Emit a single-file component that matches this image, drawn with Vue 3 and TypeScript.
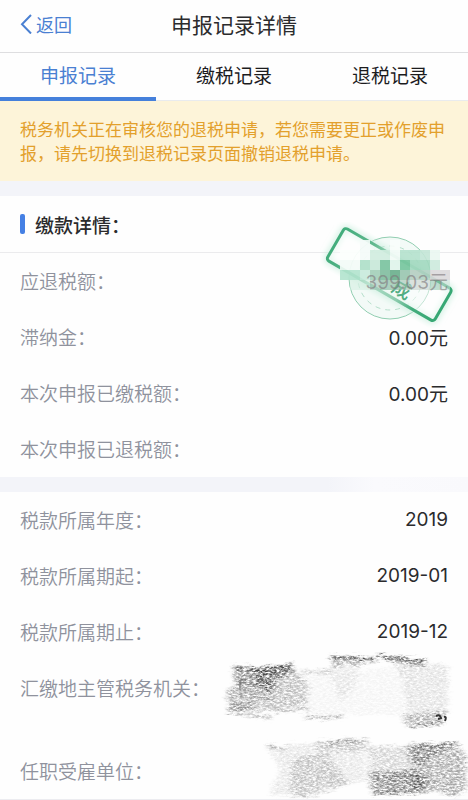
<script setup lang="ts">
import { ref } from 'vue'

interface Row {
  label: string
  value: string
}

interface Block {
  x: number
  y: number
  w: number
  h: number
  c: string
}

interface Patch {
  d: string
  o: number
}

const tabs: string[] = ['申报记录', '缴税记录', '退税记录']
const active = ref<number>(0)

const payment: Row[] = [
  { label: '滞纳金：', value: '0.00元' },
  { label: '本次申报已缴税额：', value: '0.00元' },
  { label: '本次申报已退税额：', value: '' },
]

const period: Row[] = [
  { label: '税款所属年度：', value: '2019' },
  { label: '税款所属期起：', value: '2019-01' },
  { label: '税款所属期止：', value: '2019-12' },
]

// Mosaic squares over the stamp, in stamp canvas units
const mosaic: Block[] = [
  { x: 20, y: 28, w: 20, h: 10, c: '#fcfffd' },
  { x: 40, y: 18, w: 10, h: 20, c: '#f4fbf8' },
  { x: 70, y: 18, w: 10, h: 10, c: '#f9fdfb' },
  { x: 50, y: 28, w: 20, h: 10, c: '#d0ecdf' },
  { x: 70, y: 28, w: 10, h: 10, c: '#f3fbf7' },
  { x: 80, y: 28, w: 20, h: 10, c: '#b5e1cd' },
  { x: 100, y: 28, w: 10, h: 10, c: '#c3e6d6' },
  { x: 110, y: 28, w: 10, h: 10, c: '#eaf7f1' },
  { x: 20, y: 38, w: 20, h: 10, c: '#f3fbf7' },
  { x: 40, y: 38, w: 10, h: 10, c: '#addfc8' },
  { x: 50, y: 38, w: 10, h: 10, c: '#c6e8d8' },
  { x: 60, y: 38, w: 10, h: 10, c: '#78c29d' },
  { x: 70, y: 38, w: 10, h: 10, c: '#dff4ea' },
  { x: 80, y: 38, w: 10, h: 10, c: '#74c49c' },
  { x: 90, y: 38, w: 20, h: 10, c: '#a1d8bf' },
  { x: 110, y: 38, w: 10, h: 10, c: '#cceadd' },
  { x: 20, y: 48, w: 20, h: 10, c: '#b3e3ce' },
  { x: 40, y: 48, w: 10, h: 10, c: '#c8eadb' },
  { x: 50, y: 48, w: 10, h: 10, c: '#a2ceb8' },
  { x: 60, y: 48, w: 10, h: 10, c: '#80bd9f' },
  { x: 70, y: 48, w: 10, h: 10, c: '#68ae8b' },
  { x: 80, y: 48, w: 10, h: 10, c: '#98c5af' },
  { x: 90, y: 48, w: 10, h: 10, c: '#b5cdc1' },
  { x: 100, y: 48, w: 10, h: 10, c: '#b1d2c3' },
  { x: 110, y: 48, w: 20, h: 10, c: '#dcd9db' },
  { x: 30, y: 58, w: 20, h: 10, c: '#d3eee1' },
  { x: 50, y: 58, w: 10, h: 10, c: '#a3c4b5' },
  { x: 60, y: 58, w: 20, h: 10, c: '#7ab498' },
  { x: 80, y: 58, w: 10, h: 10, c: '#9cc2af' },
  { x: 90, y: 58, w: 20, h: 10, c: '#c6d0cc' },
  { x: 110, y: 58, w: 10, h: 10, c: '#98c8b2' },
  { x: 120, y: 58, w: 10, h: 10, c: '#cbe0d7' },
]

// Broad pencil hatching, light to dark
const patches: Patch[] = [
  { d: 'M14 28L72 26L88 46L86 66L50 71L8 73L7 50L14 48Z', o: 0.34 },
  { d: 'M14 30L50 30L60 50L18 50Z', o: 0.42 },
  { d: 'M34 30L73 26L73 34L52 40L50 54L38 46Z', o: 0.8 },
  { d: 'M8 50L48 52L55 60L8 60Z', o: 0.25 },
  { d: 'M10 64L34 63L34 72L10 72Z', o: 0.35 },
  { d: 'M82 31L112 30L112 35L82 36Z', o: 0.25 },
  { d: 'M82 38L190 26L190 76L82 76Z', o: 0.04 },
  { d: 'M112 22L140 22L134 50L120 64L112 40Z', o: 0.1 },
  { d: 'M112 18L156 20L156 24L128 26L112 28Z', o: 0.35 },
  { d: 'M158 18L205 22L204 28L174 24Z', o: 0.5 },
  { d: 'M174 24L228 26L228 76L190 80L182 40Z', o: 0.14 },
  { d: 'M182 76L226 72L222 86L186 88Z', o: 0.36 },
  { d: 'M48 107L96 104L144 100L146 142L94 150L82 158L50 156L60 130Z', o: 0.12 },
  { d: 'M72 120L106 112L128 144L92 158L70 156Z', o: 0.24 },
  { d: 'M96 102L146 101L150 112L98 112Z', o: 0.2 },
  { d: 'M148 108L190 106L200 150L148 134Z', o: 0.22 },
  { d: 'M190 106L236 104L246 116L246 150L236 158L196 146Z', o: 0.45 },
  { d: 'M188 106L230 106L200 128L188 120Z', o: 0.42 },
  { d: 'M148 134L194 132L206 146L200 154L153 154Z', o: 0.6 },
  { d: 'M192 132L204 136L208 144L204 150L194 150Z', o: 0.65 },
]

const edges: Patch[] = [
  { d: 'M13 28Q42 33 72 26', o: 0.75 },
  { d: 'M110 18L154 20M156 17L205 22', o: 1 },
  { d: 'M8 72L50 79M52 72L90 70', o: 0.4 },
  { d: 'M106 103L144 101M47 107L66 110', o: 0.4 },
  { d: 'M186 107L236 105', o: 0.55 },
  { d: 'M152 155L210 152M86 78L122 78M192 86L222 84', o: 0.45 },
]
</script>

<template>
  <main class="page" lang="zh-CN">
    <header class="bar">
      <a class="back" href="#">
        <svg class="chevron" viewBox="0 0 12 20" aria-hidden="true">
          <path d="M11 1L2 10.300L11 19.500" />
        </svg>
        返回
      </a>
      <h1 class="title">申报记录详情</h1>
    </header>

    <nav class="tabs">
      <button
        v-for="(tab, i) in tabs"
        :key="tab"
        type="button"
        class="tab"
        :class="{ on: active === i }"
        @click="active = i"
      >
        {{ tab }}
      </button>
    </nav>

    <p class="notice">税务机关正在审核您的退税申请，若您需要更正或作废申报，请先切换到退税记录页面撤销退税申请。</p>

    <section class="card">
      <h2 class="heading">缴款详情：</h2>
      <dl class="rows">
        <div class="row">
          <dt>应退税额：</dt>
          <dd class="masked">399.03元</dd>
          <svg class="stamp" viewBox="0 0 140 106" aria-hidden="true">
            <defs>
              <linearGradient id="stampEdge" x1="0" x2="1" y1="0" y2="0">
                <stop offset="0" stop-color="#43ad7c" />
                <stop offset="0.28" stop-color="#62b98f" />
                <stop offset="0.45" stop-color="#a5dac1" />
                <stop offset="0.65" stop-color="#8ccbad" />
                <stop offset="0.8" stop-color="#43ad7c" />
                <stop offset="1" stop-color="#37a874" />
              </linearGradient>
              <filter id="glow" x="-10%" y="-20%" width="120%" height="140%">
                <feGaussianBlur stdDeviation="3" />
              </filter>
            </defs>
            <circle cx="70" cy="56" r="41" class="ring" />
            <circle cx="70" cy="56" r="32" class="dashes" />
            <g transform="rotate(30 69 53)">
              <rect x="7" y="34" width="124" height="37" rx="3" class="halo" filter="url(#glow)" />
              <rect x="7" y="34" width="124" height="37" rx="3" class="plate" />
              <text x="78" y="66" class="seal">成</text>
            </g>
            <rect
              v-for="(b, i) in mosaic"
              :key="i"
              :x="b.x"
              :y="b.y"
              :width="b.w"
              :height="b.h"
              :fill="b.c"
              :opacity="b.y > 50 ? 0.6 : 0.9"
              shape-rendering="crispEdges"
            />
          </svg>
        </div>
        <div v-for="row in payment" :key="row.label" class="row">
          <dt>{{ row.label }}</dt>
          <dd>{{ row.value }}</dd>
        </div>
      </dl>
    </section>

    <div class="gap"></div>

    <section class="card last">
      <dl class="rows">
        <div v-for="row in period" :key="row.label" class="row">
          <dt>{{ row.label }}</dt>
          <dd>{{ row.value }}</dd>
        </div>
        <div class="row tall">
          <dt>汇缴地主管税务机关：</dt>
          <dd></dd>
        </div>
        <div class="row">
          <dt>任职受雇单位：</dt>
          <dd></dd>
        </div>
      </dl>
      <svg class="scribble" viewBox="0 0 248 160" aria-hidden="true">
        <defs>
          <filter id="pencil" x="-5%" y="-5%" width="110%" height="110%">
            <feTurbulence type="fractalNoise" baseFrequency="0.3 0.6" numOctaves="4" seed="21" result="grain" />
            <feColorMatrix
              in="grain"
              type="matrix"
              values="0 0 0 0 0  0 0 0 0 0  0 0 0 0 0  2.400 0 0 0 -0.650"
              result="mask"
            />
            <feTurbulence type="fractalNoise" baseFrequency="0.09 0.4" numOctaves="2" seed="3" result="drift" />
            <feGaussianBlur in="SourceGraphic" stdDeviation="2 1" result="soft" />
            <feDisplacementMap
              in="soft"
              in2="drift"
              scale="9"
              xChannelSelector="R"
              yChannelSelector="B"
              result="rough"
            />
            <feComposite in="rough" in2="mask" operator="in" />
          </filter>
        </defs>
        <g filter="url(#pencil)">
          <path v-for="(p, i) in patches" :key="i" :d="p.d" :opacity="p.o" class="patch" />
          <path v-for="(e, i) in edges" :key="'e' + i" :d="e.d" :opacity="e.o" class="edge" />
        </g>
        <path d="M20 51V41H26" class="mark" />
        <path d="M216 77Q220 75 221 79L218 80M224 78Q227 77 225 82" class="mark strong" />
        <path d="M204 128L240 106M210 134L244 112M206 142L246 120" class="sweep" />
      </svg>
    </section>
  </main>
</template>

<style>
body {
  margin: 0;
  background: #f3f4f9;
}
</style>

<style scoped>
.page {
  font-family: Inter, 'Noto Sans CJK SC', sans-serif;
  font-size: 19px;
  color: #2b2b2d;
  overflow: hidden;
}

.bar {
  display: grid;
  grid-template-columns: 1fr auto 1fr;
  align-items: center;
  box-sizing: border-box;
  height: 53px;
  padding: 0 20px 4px;
  border-bottom: 1px solid #dedee0;
  background: #fefefe;
}

.back {
  display: flex;
  align-items: center;
  gap: 4px;
  font-size: 18px;
  color: #4a80d2;
  text-decoration: none;
}

.chevron {
  width: 12px;
  height: 20px;
  fill: none;
  stroke: #4a80d2;
  stroke-width: 2;
}

.title {
  margin: 0;
  font-size: 21px;
  font-weight: 400;
}

.tabs {
  display: grid;
  grid-template-columns: repeat(3, 1fr);
  height: 48px;
  background: #fefefe;
}

.tab {
  padding: 0 0 4px;
  border: 0;
  border-bottom: 1px solid #e9ebee;
  background: none;
  font: inherit;
  color: #1c1c1e;
  cursor: pointer;
}

.tab.on {
  padding-bottom: 1px;
  border-bottom: 4px solid #4580db;
  color: #4a80d2;
}

.notice {
  margin: 0 0 15px;
  padding: 17px 20px 15px;
  background: #fdf4d9;
  font-size: 17px;
  line-height: 24px;
  color: #e3a02c;
}

.card {
  position: relative;
  background: #fefefe;
}

.last {
  border-bottom: 1px solid #ececf0;
}

.gap {
  height: 15px;
  background: linear-gradient(to right, #f3f4f9 70%, #fafafd 80%, #f9f9fc);
}

.heading {
  display: flex;
  align-items: center;
  gap: 10px;
  box-sizing: border-box;
  height: 57px;
  margin: 0;
  padding: 0 20px;
  border-bottom: 1px solid #ebebed;
  font-family: 'Noto Sans CJK SC', sans-serif;
  font-size: 19px;
  font-weight: 500;
}

.heading::before {
  content: '';
  width: 5px;
  height: 20px;
  border-radius: 2px;
  background: #4580e4;
}

.rows {
  margin: 0;
}

.row {
  position: relative;
  display: flex;
  align-items: center;
  justify-content: space-between;
  box-sizing: border-box;
  height: 56px;
  padding: 0 20px 2px;
}

.tall {
  align-items: flex-start;
  height: 83px;
  line-height: 56px;
}

dt {
  font-family: 'Noto Sans CJK SC', sans-serif;
  color: #8f929d;
  font-weight: 350;
}

dd {
  margin: 0;
}

.masked {
  position: relative;
  z-index: 1;
  color: rgba(125, 118, 122, 0.6);
}

.stamp {
  position: absolute;
  top: -31px;
  right: 8px;
  width: 140px;
  height: 106px;
}

.ring {
  fill: rgba(120, 200, 160, 0.08);
  stroke: #91ceb1;
  stroke-width: 1;
}

.dashes {
  fill: none;
  stroke: #b5dfcb;
  stroke-width: 1;
  stroke-dasharray: 5 5;
}

.halo {
  fill: none;
  stroke: #c5eddb;
  stroke-width: 5;
}

.plate {
  fill: rgba(255, 255, 255, 0.45);
  stroke: url(#stampEdge);
  stroke-width: 3;
}

.seal {
  font-size: 19px;
  font-weight: 500;
  fill: #52ad82;
}

.scribble {
  position: absolute;
  right: 0;
  bottom: 0;
  width: 248px;
  height: 160px;
  pointer-events: none;
}

.patch {
  fill: #3c3c3c;
}

.edge {
  fill: none;
  stroke: #303030;
  stroke-width: 3;
}

.mark {
  fill: none;
  stroke: #6a6a6a;
  stroke-width: 1;
}

.strong {
  stroke: #333333;
  stroke-width: 2;
}

.sweep {
  fill: none;
  stroke: #ffffff;
  stroke-width: 1;
  opacity: 0.35;
}
</style>
